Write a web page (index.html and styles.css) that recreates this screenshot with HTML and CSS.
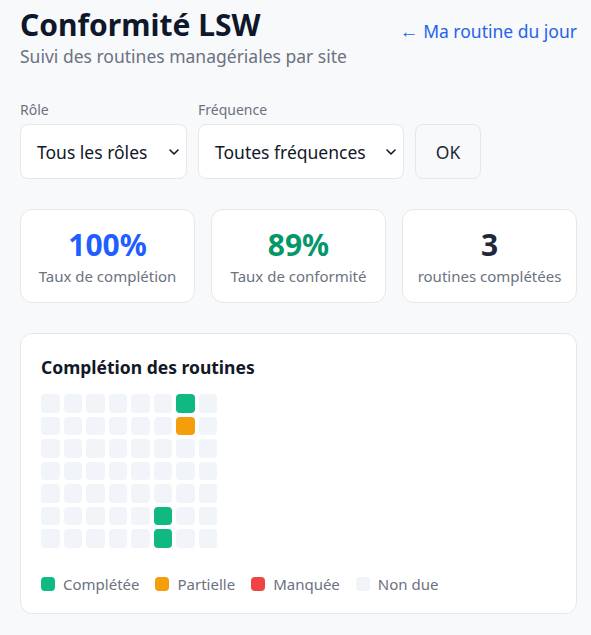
FILE: index.html
```html
<!DOCTYPE html>
<html lang="fr">
<head>
<meta charset="utf-8">
<link rel="stylesheet" href="styles.css">
</head>
<body>
<div class="page">
  <header class="head">
    <div>
      <h1 class="title">Conformité LSW</h1>
      <p class="subtitle">Suivi des routines managériales par site</p>
    </div>
    <a class="back" href="#"><span class="arrow">←</span> Ma routine du jour</a>
  </header>

  <form class="filters">
    <label class="field">
      <span class="lbl">Rôle</span>
      <span class="select s1">Tous les rôles<svg class="chev" viewBox="0 0 10 6" width="10" height="6"><path d="M1 1l4 4 4-4" fill="none" stroke="#111827" stroke-width="1.6" stroke-linecap="round" stroke-linejoin="round"/></svg></span>
    </label>
    <label class="field">
      <span class="lbl">Fréquence</span>
      <span class="select s2">Toutes fréquences<svg class="chev" viewBox="0 0 10 6" width="10" height="6"><path d="M1 1l4 4 4-4" fill="none" stroke="#111827" stroke-width="1.6" stroke-linecap="round" stroke-linejoin="round"/></svg></span>
    </label>
    <button class="ok" type="button">OK</button>
  </form>

  <section class="stats">
    <div class="stat"><div class="num blue">100%</div><div class="cap">Taux de complétion</div></div>
    <div class="stat"><div class="num green">89%</div><div class="cap">Taux de conformité</div></div>
    <div class="stat"><div class="num dark">3</div><div class="cap">routines complétées</div></div>
  </section>

  <section class="chart">
    <h2 class="chart-title">Complétion des routines</h2>
    <div class="grid">
      <span></span><span></span><span></span><span></span><span></span><span></span><span class="c-done"></span><span></span>
      <span></span><span></span><span></span><span></span><span></span><span></span><span class="c-part"></span><span></span>
      <span></span><span></span><span></span><span></span><span></span><span></span><span></span><span></span>
      <span></span><span></span><span></span><span></span><span></span><span></span><span></span><span></span>
      <span></span><span></span><span></span><span></span><span></span><span></span><span></span><span></span>
      <span></span><span></span><span></span><span></span><span></span><span class="c-done"></span><span></span><span></span>
      <span></span><span></span><span></span><span></span><span></span><span class="c-done"></span><span></span><span></span>
    </div>
    <div class="legend">
      <span class="item"><i class="sw c-done"></i>Complétée</span>
      <span class="item"><i class="sw c-part"></i>Partielle</span>
      <span class="item"><i class="sw c-miss"></i>Manquée</span>
      <span class="item"><i class="sw c-none"></i>Non due</span>
    </div>
  </section>
</div>
</body>
</html>
```

FILE: styles.css
```css
* { box-sizing: border-box; }
html, body { margin: 0; padding: 0; }
body {
  background: #f8f9fb;
  font-family: "Noto Sans", "Open Sans", sans-serif;
  color: #111827;
}
.page {
  width: 557px;
  margin-left: 20px;
  padding-top: 6px;
}
.head {
  display: flex;
  justify-content: space-between;
  align-items: flex-start;
}
.title {
  margin: 0;
  font-size: 30px;
  font-weight: 700;
  line-height: 38px;
  color: #0f172a;
}
.subtitle {
  margin: 0;
  font-size: 17.5px;
  line-height: 25px;
  color: #6b7280;
}
.back {
  display: block;
  margin-top: 13px;
  height: 24px;
  font-size: 17.5px;
  line-height: 24px;
  color: #2563eb;
  text-decoration: none;
}
.arrow {
  font-family: "Liberation Sans", sans-serif;
  font-size: 19px;
  line-height: 1;
}
.filters {
  display: flex;
  align-items: flex-end;
  gap: 11px;
  margin: 31px 0 0;
}
.field { display: flex; flex-direction: column; }
.lbl {
  font-size: 14px;
  line-height: 20px;
  color: #6b7280;
  margin-bottom: 4px;
}
.select {
  display: flex;
  align-items: center;
  justify-content: space-between;
  height: 55px;
  padding: 0 7px 0 16px;
  background: #fff;
  border: 1px solid #e5e7eb;
  border-radius: 8px;
  font-size: 17.5px;
  color: #111827;
}
.s1 { width: 167px; }
.s2 { width: 206px; }
.ok {
  height: 55px;
  width: 66px;
  background: #f8f9fb;
  border: 1px solid #e5e7eb;
  border-radius: 8px;
  font-family: inherit;
  font-size: 17.5px;
  color: #1f2937;
}
.stats {
  display: grid;
  grid-template-columns: repeat(3, 1fr);
  gap: 16px;
  margin-top: 30px;
}
.stat {
  background: #fff;
  border: 1px solid #e5e7eb;
  border-radius: 12px;
  height: 94px;
  display: flex;
  flex-direction: column;
  align-items: center;
  justify-content: center;
  padding-top: 2px;
}
.num {
  font-size: 30px;
  font-weight: 700;
  line-height: 36px;
}
.blue { color: #1f5eff; }
.green { color: #059669; }
.dark { color: #1e293b; }
.cap {
  font-size: 15px;
  line-height: 22px;
  color: #6b7280;
  margin-top: 2px;
}
.chart {
  margin-top: 30px;
  background: #fff;
  border: 1px solid #e5e7eb;
  border-radius: 12px;
  padding: 21px 20px 18px;
}
.chart-title {
  margin: 0;
  font-size: 17.5px;
  font-weight: 700;
  line-height: 24px;
  color: #111827;
}
.grid {
  display: grid;
  grid-template-columns: repeat(8, 18.5px);
  grid-auto-rows: 18.5px;
  gap: 4px;
  margin-top: 15px;
}
.grid span {
  background: #f1f4f8;
  border-radius: 4px;
}
.grid .c-done, .sw.c-done { background: #10b981; }
.grid .c-part, .sw.c-part { background: #f59e0b; }
.sw.c-miss { background: #ef4444; }
.sw.c-none { background: #f1f4f8; }
.legend {
  display: flex;
  gap: 16px;
  margin-top: 25px;
  font-size: 15px;
  line-height: 22px;
  color: #6b7280;
}
.item { display: flex; align-items: center; }
.sw {
  width: 14px;
  height: 14px;
  border-radius: 4px;
  margin-right: 8px;
  display: inline-block;
}
```
